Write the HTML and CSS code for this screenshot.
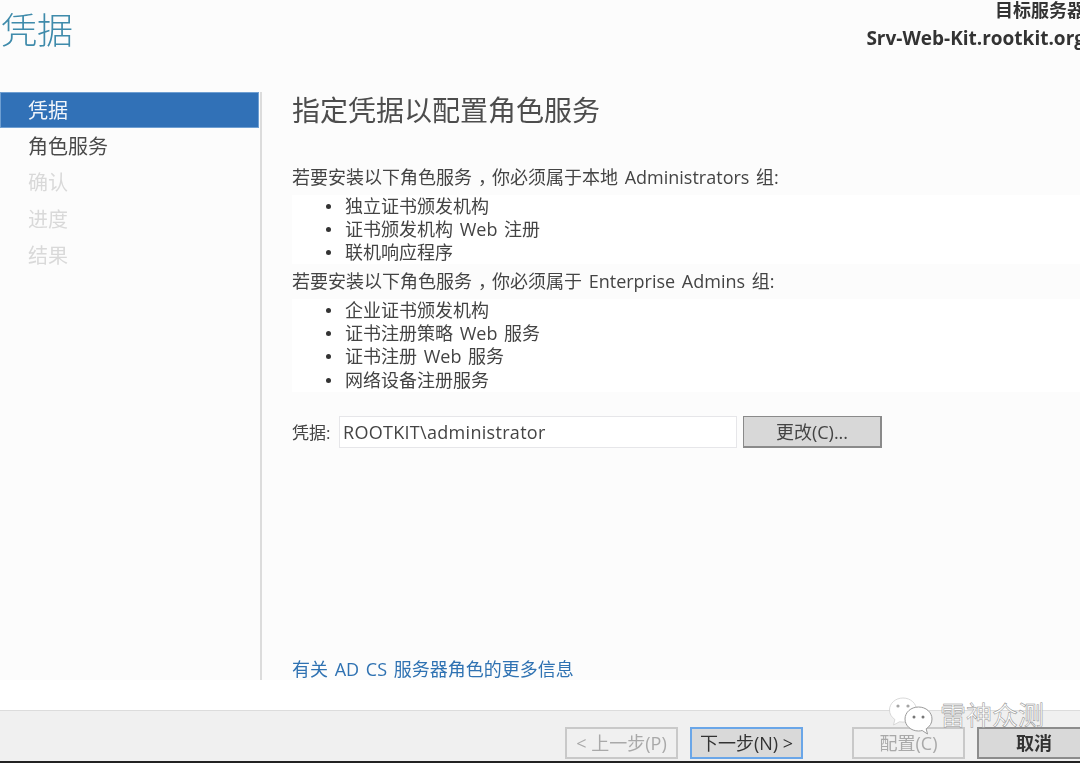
FILE: index.html
```html
<!DOCTYPE html>
<html lang="zh-CN">
<head>
<meta charset="utf-8">
<title>凭据</title>
<link rel="stylesheet" href="styles.css">
</head>
<body>
<div class="window">
  <header class="top">
    <h1 class="title">凭据</h1>
    <div class="server">
      <div class="server-label">目标服务器</div>
      <div class="server-name">Srv-Web-Kit.rootkit.org</div>
    </div>
  </header>
  <div class="main">
    <nav class="side">
      <div class="step selected">凭据</div>
      <div class="step">角色服务</div>
      <div class="step off">确认</div>
      <div class="step off">进度</div>
      <div class="step off">结果</div>
    </nav>
    <section class="content">
      <h2 class="heading">指定凭据以配置角色服务</h2>
      <p class="para">若要安装以下角色服务<span class="comma">，</span>你必须属于本地 Administrators 组:</p>
      <ul class="list">
        <li>独立证书颁发机构</li>
        <li>证书颁发机构 Web 注册</li>
        <li>联机响应程序</li>
      </ul>
      <p class="para">若要安装以下角色服务<span class="comma">，</span>你必须属于 Enterprise Admins 组:</p>
      <ul class="list">
        <li>企业证书颁发机构</li>
        <li>证书注册策略 Web 服务</li>
        <li>证书注册 Web 服务</li>
        <li>网络设备注册服务</li>
      </ul>
      <div class="cred">
        <span class="cred-label">凭据:</span>
        <div class="cred-input">ROOTKIT\administrator</div>
        <button class="cred-btn">更改(C)...</button>
      </div>
      <a class="more">有关 AD CS 服务器角色的更多信息</a>
    </section>
  </div>
  <footer class="foot">
    <button class="btn off">&lt; 上一步(P)</button>
    <button class="btn focus">下一步(N) &gt;</button>
    <button class="btn off gap">配置(C)</button>
    <button class="btn cancel">取消</button>
  </footer>
</div>
<div class="mark">
  <svg class="mark-icon" width="46" height="42" viewBox="0 0 46 42">
    <path d="M15 4C7.500 4 1.500 9.300 1.500 16c0 3.900 2.100 7.300 5.400 9.500L5.500 31l6-3.200c1.100.2 2.300.3 3.500.3 7.500 0 13.500-5.300 13.500-12S22.500 4 15 4z" fill="#fff" stroke="#cfcfcf" stroke-width=".8"/>
    <path d="M30.500 13C23 13 17 18.300 17 25s6 12 13.500 12c1.300 0 2.500-.2 3.700-.5l5.300 3.500-1.300-5.200c3.700-2.200 5.800-5.800 5.800-9.800 0-6.700-6-12-13.500-12z" fill="#fff" stroke="#9a9a9a" stroke-width="1"/>
    <circle cx="10" cy="12" r="1.600" fill="#a5a5a5"/>
    <circle cx="20" cy="12" r="1.600" fill="#a5a5a5"/>
    <circle cx="26" cy="23" r="1.500" fill="#777"/>
    <circle cx="35" cy="23" r="1.500" fill="#777"/>
  </svg>
  <span class="mark-text">雷神众测</span>
</div>
</body>
</html>
```
FILE: styles.css
```css
* { box-sizing: border-box; }
html, body { margin: 0; height: 100%; }
body {
  width: 1080px;
  height: 763px;
  overflow: hidden;
  position: relative;
  background: #fcfcfc;
  color: #444;
  font-family: "Open Sans", "Noto Sans CJK SC", sans-serif;
}
.window {
  width: 1080px;
  height: 763px;
  display: flex;
  flex-direction: column;
  filter: blur(0.55px);
}
.top {
  height: 92px;
  flex: none;
  display: flex;
  justify-content: space-between;
  align-items: flex-start;
}
.title {
  margin: 7px 0 0 1px;
  font-size: 36px;
  line-height: 48px;
  font-weight: 300;
  color: #3f8bab;
}
.server {
  margin-right: -5px;
  text-align: right;
  font-weight: 700;
  color: #333;
  white-space: nowrap;
}
.server-label { font-size: 18px; line-height: 20px; }
.server-name { font-size: 19px; line-height: 24px; margin-top: 6px; }
.main {
  height: 588px;
  flex: none;
  display: flex;
}
.side {
  width: 262px;
  flex: none;
  border-right: 2px solid #dcdcdc;
  padding-right: 1px;
}
.step {
  height: 36.300px;
  padding-left: 28px;
  font-size: 20px;
  line-height: 38px;
  color: #4a4a4a;
}
.step.off { color: #d9d9d9; }
.step.selected {
  height: 36px;
  background: #3171b7;
  color: #f2f6fb;
  border: 1px solid #6f9fd2;
  padding-left: 27px;
  line-height: 36px;
}
.content {
  flex: 1;
  min-width: 0;
  padding-left: 30px;
  display: flex;
  flex-direction: column;
  white-space: nowrap;
}
.heading {
  margin: 0;
  height: 36px;
  font-size: 28px;
  line-height: 36px;
  font-weight: 400;
  color: #4d4d4d;
}
.para {
  margin: 0;
  height: 33px;
  font-size: 18px;
  line-height: 31px;
  word-spacing: 2px;
  color: #444;
}
.heading + .para { margin-top: 34px; }
.list + .para { height: 35px; line-height: 34px; }
.comma { padding-left: 6px; margin-right: -4px; }
.list {
  margin: 0;
  padding: 0 0 0 53px;
  list-style: none;
  background: #fff;
  font-size: 18px;
  line-height: 23.100px;
  word-spacing: 2px;
}
.list li { position: relative; }
.list li::before {
  content: "";
  position: absolute;
  left: -19px;
  top: 9px;
  width: 5px;
  height: 5px;
  border-radius: 50%;
  background: #333;
}
.cred {
  display: flex;
  align-items: stretch;
  height: 32px;
  margin-top: 24px;
}
.cred-label {
  width: 47px;
  flex: none;
  font-size: 17px;
  line-height: 33px;
}
.cred-input {
  width: 398px;
  flex: none;
  background: #fff;
  border: 1px solid #e6e6e9;
  padding-left: 3px;
  font-size: 18px;
  letter-spacing: .3px;
  line-height: 30px;
  color: #444;
}
.cred-btn {
  width: 139px;
  margin-left: 6px;
  border: 2px solid #8a8a8a;
  border-width: 1px 2px 2px 1px;
  background: #d8d8d8;
  font: inherit;
  font-size: 18px;
  color: #444;
  padding: 0;
}
.more {
  margin-top: auto;
  height: 24px;
  font-size: 18px;
  line-height: 26px;
  word-spacing: 2px;
  color: #2f72b2;
}
.foot {
  height: 83px;
  flex: none;
  padding: 47px 0 0 565px;
  display: flex;
  align-items: flex-start;
  gap: 12px;
  position: relative;
  background: linear-gradient(#fff 0, #fff 30px, #dcdcdc 30px, #dcdcdc 31px, #f0f0f0 31px, #f0f0f0 81px, #222 81px);
}
.btn {
  width: 113px;
  height: 32px;
  flex: none;
  border: 2px solid #c9c9c9;
  background: #f0f0f0;
  font: inherit;
  font-size: 18px;
  line-height: 28px;
  padding: 0;
  color: #444;
  white-space: nowrap;
}
.btn.off { color: #a9a9a9; }
.btn.focus { background: #d9d9d9; border-color: #6aa6e8; color: #333; }
.btn.gap { margin-left: 37px; }
.btn.cancel { background: #d9d9d9; border-color: #8c8c8c; color: #333; font-weight: 700; width: 114px; }
.mark {
  position: absolute;
  left: 888px;
  top: 694px;
  display: flex;
  align-items: center;
  gap: 6px;
  width: 170px;
}
.mark-text {
  font-size: 26px;
  line-height: 42px;
  color: #fff;
  -webkit-text-stroke: 0.5px #8d8d8d;
  white-space: nowrap;
}
```
